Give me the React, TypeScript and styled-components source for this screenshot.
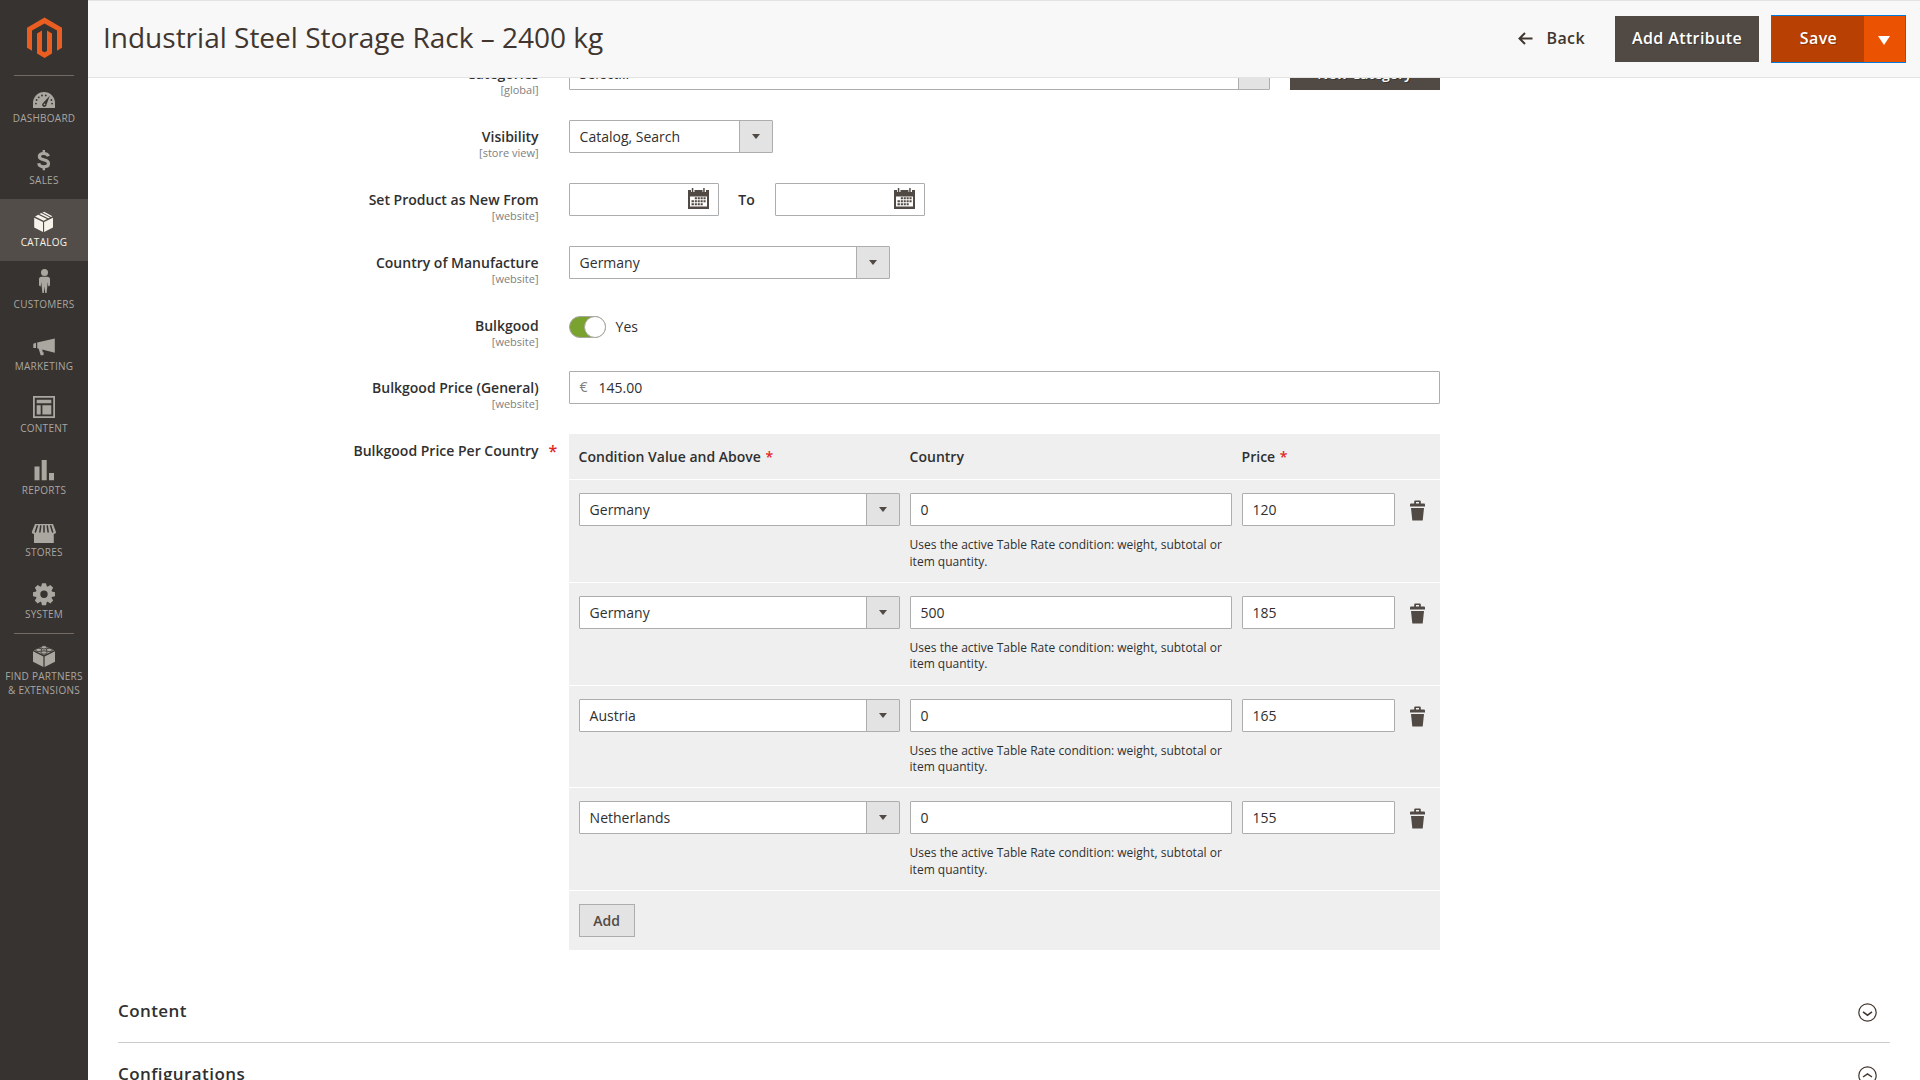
import React from 'react';
import styled, { createGlobalStyle, css } from 'styled-components';

const GlobalStyle = createGlobalStyle`
  *, *::before, *::after { box-sizing: border-box; }
  body {
    margin: 0;
    background: #fff;
    color: #303030;
    font: 400 14px/1.36 'Open Sans', 'Noto Sans', sans-serif;
  }
`;

const Page = styled.div`
  display: flex;
  width: 1920px;
  height: 1080px;
  overflow: hidden;
`;

/* ---------- Sidebar ---------- */

const Sidebar = styled.nav`
  display: flex;
  flex-direction: column;
  flex: none;
  width: 88px;
  background: #373330;
`;

const LogoLink = styled.div`
  height: 75px;
`;

const Divider = styled.hr`
  flex: none;
  width: 60px;
  height: 1px;
  margin: 0 auto -1px;
  border: 0;
  background: #736963;
`;

const MenuItem = styled.a<{ $active?: boolean }>`
  display: flex;
  flex-direction: column;
  flex: none;
  height: 62px;
  background: ${(p) => (p.$active ? '#524d49' : 'transparent')};
  color: ${(p) => (p.$active ? '#f7f3eb' : '#aaa6a0')};
`;

const MenuIcon = styled.svg`
  display: block;
  flex: none;
  width: 88px;
  height: 36px;
  fill: currentColor;
`;

const MenuLabel = styled.span`
  font-size: 10px;
  line-height: 14px;
  letter-spacing: 0.25px;
  text-align: center;
  text-transform: uppercase;
  white-space: pre-line;
`;

/* ---------- Header ---------- */

const Main = styled.main`
  display: flex;
  flex-direction: column;
  flex: 1;
  min-width: 0;
`;

const Header = styled.header`
  display: flex;
  align-items: center;
  flex: none;
  height: 78px;
  padding: 0 14px 0 15px;
  border: solid #e3e3e3;
  border-width: 1px 0;
  background: #f8f8f8;
`;

const Title = styled.h1`
  flex: 1;
  margin: 0;
  padding-bottom: 4px;
  color: #41362f;
  font-size: 28px;
  font-weight: 400;
  line-height: 38px;
`;

const actionText = css`
  padding-bottom: 2px;
  font-size: 16px;
  font-weight: 600;
  letter-spacing: 0.4px;
  line-height: 22px;
`;

const BackButton = styled.a`
  display: flex;
  align-items: center;
  gap: 13px;
  margin-right: 30px;
  color: #41362f;
  ${actionText}
`;

const PrimaryButton = styled.a`
  display: flex;
  align-items: center;
  justify-content: center;
  width: 144px;
  height: 46px;
  margin-right: 12px;
  background: #514943;
  color: #fff;
  text-shadow: 1px 1px 0 rgba(0, 0, 0, 0.25);
  ${actionText}
`;

const SplitButton = styled.div`
  display: flex;
  width: 135px;
  height: 48px;
  border: 1px solid #007bdb;
  background: #eb5202;
`;

const SaveLabel = styled.span`
  display: flex;
  align-items: center;
  justify-content: center;
  width: 92px;
  padding-left: 1px;
  background: #b84002;
  color: #fff;
  text-shadow: 1px 1px 0 rgba(0, 0, 0, 0.25);
  ${actionText}
`;

const SaveToggle = styled.span`
  display: flex;
  align-items: center;
  justify-content: center;
  flex: 1;
  padding: 3px 1px 0 0;
`;

/* ---------- Form ---------- */

const Content = styled.div`
  flex: 1;
  min-height: 0;
  overflow: hidden;
`;

const Form = styled.div`
  margin-top: -21px;
`;

const Field = styled.div<{ $height?: number }>`
  display: flex;
  align-items: flex-start;
  height: ${(p) => p.$height ?? 63}px;
`;

const FieldLabel = styled.div`
  width: 450.6px;
  padding-top: 7px;
  font-weight: 600;
  line-height: 19px;
  text-align: right;
`;

const Scope = styled.div`
  color: #808080;
  font-size: 11px;
  font-weight: 400;
  line-height: 13px;
`;

const LabelGap = styled.div`
  width: 30px;
  padding: 8px 0 0 10px;
`;

const Star = styled.span<{ $size: number }>`
  margin-left: ${(p) => (p.$size < 16 ? 1 : 0)}px;
  color: #e22626;
  font-size: ${(p) => p.$size}px;
  font-weight: 600;
  line-height: 19px;
`;

const Box = styled.div<{ $width: number }>`
  display: flex;
  align-items: center;
  flex: none;
  width: ${(p) => p.$width}px;
  height: 33px;
  padding-left: 10px;
  border: 1px solid #adadad;
  border-radius: 1px;
  background: #fff;
  line-height: 19px;
`;

const BoxText = styled.span`
  flex: 1;
`;

const DropButton = styled.span<{ $width: number }>`
  display: flex;
  align-items: center;
  justify-content: center;
  align-self: stretch;
  width: ${(p) => p.$width}px;
  border-left: 1px solid #adadad;
  background: #e3e3e3;
`;

const CalendarSlot = styled.span`
  display: flex;
  margin: 0 9px 0 auto;
  padding-bottom: 2px;
`;

const ToLabel = styled.span`
  width: 56px;
  padding-top: 7px;
  font-weight: 600;
  line-height: 19px;
  text-align: center;
`;

const Currency = styled.span`
  width: 19px;
  padding-bottom: 2px;
  color: #808080;
`;

const Switch = styled.div`
  display: flex;
  justify-content: flex-end;
  width: 37px;
  height: 22px;
  margin-top: 7px;
  border: 1px solid #aaa6a0;
  border-radius: 11px;
  background: #79a22e;
`;

const Knob = styled.span`
  width: 22px;
  height: 22px;
  margin: -1px -1px 0 0;
  border: 1px solid #aaa6a0;
  border-radius: 50%;
  background: #fff;
`;

const SwitchText = styled.span`
  padding: 8px 0 0 10px;
  line-height: 19px;
`;

const NewCategory = styled.a`
  display: flex;
  align-items: center;
  justify-content: center;
  width: 150px;
  height: 33px;
  margin-left: 20px;
  padding-top: 1px;
  background: #514943;
  color: #fff;
  font-weight: 600;
  text-shadow: 1px 1px 0 rgba(0, 0, 0, 0.3);
`;

/* ---------- Price table ---------- */

const Table = styled.div`
  width: 871px;
  background: #efefef;
`;

const columns = css`
  display: grid;
  grid-template-columns: 321px 322px 153px auto;
  column-gap: 10px;
  padding-left: 10px;
`;

const TableHead = styled.div`
  ${columns}
  height: 45px;
  padding-top: 13px;
  font-weight: 600;
  line-height: 19px;
`;

const TableRow = styled.div`
  ${columns}
  align-items: start;
  height: 102.75px;
  padding-top: 13px;
  border-top: 1px solid #fff;
`;

const Note = styled.div`
  margin-top: 11px;
  font-size: 12px;
  line-height: 16.6px;
`;

const TrashSlot = styled.span`
  display: flex;
  padding: 7px 0 0 5px;
`;

const TableFoot = styled.div`
  height: 60px;
  padding: 13px 10px 0;
  border-top: 1px solid #fff;
`;

const AddButton = styled.a`
  display: flex;
  align-items: center;
  justify-content: center;
  width: 56px;
  height: 33px;
  border: 1px solid #adadad;
  background: #e3e3e3;
  color: #514943;
  font-weight: 600;
`;

/* ---------- Collapsible sections ---------- */

const Sections = styled.div`
  margin: 30px 30px 0;
`;

const Section = styled.div`
  display: flex;
  align-items: center;
  justify-content: space-between;
  height: 63px;
  padding-right: 13px;
  border-bottom: 1px solid #ccc;
  font-size: 17px;
  font-weight: 600;
  letter-spacing: 0.425px;
  line-height: 24px;

  svg {
    margin-top: 2px;
  }
`;

/* ---------- Icons ---------- */

const Logo = () => (
  <svg width="88" height="75" viewBox="0 0 88 75" fill="#eb5e21">
    <path d="M44.5 17.6 62 27.7v20.1l-5 2.9V30.6l-12.5-7.2L32 30.6v20.1l-5-2.9V27.7z" />
    <path d="M37 33.4l5-2.9v20.4l2.5 1.4 2.5-1.4V30.5l5 2.9v20.2l-7.5 4.3-7.5-4.3z" />
  </svg>
);

const gearTeeth = [0, 45, 90, 135, 180, 225, 270, 315];

const icons: Record<string, React.ReactNode> = {
  dashboard: (
    <>
      <path d="M33 33v-5a11 11 0 0 1 22 0v5z" />
      <g fill="#373330">
        <circle cx="35.9" cy="28.6" r=".9" />
        <circle cx="36.6" cy="25" r=".9" />
        <circle cx="38.8" cy="22.3" r=".9" />
        <circle cx="42" cy="20.5" r=".9" />
        <circle cx="45.8" cy="20.4" r=".9" />
        <circle cx="51.4" cy="25" r=".9" />
        <circle cx="52.1" cy="28.6" r=".9" />
        <path d="M49.8 20.8l-3.3 8.6a2.2 2.2 0 1 1-3.2-1.7z" />
      </g>
      <circle cx="44.5" cy="29.4" r=".8" />
    </>
  ),
  sales: (
    <g fill="none" stroke="currentColor">
      <path
        strokeWidth="3.2"
        d="M48.4 19.2c-.6-1.900-2.200-2.700-4.700-2.700-2.700 0-4.300 1.200-4.300 3 0 2.300 2 2.800 4.400 3.300 2.800.6 4.700 1.400 4.700 3.700 0 2.100-1.900 3.300-4.700 3.300-2.800 0-4.700-1.200-5.100-3.500"
      />
      <path strokeWidth="2.4" d="M43.800 13v4M43.800 29v4.300" />
    </g>
  ),
  catalog: (
    <>
      <path d="M34.2 18.7l8.8 4.4v9.9l-8.800-4.600zM53 18.700l-8.900 4.400v9.900l8.900-4.600z" />
      <path d="M35 17.400l3.300-1.700 8.700 4.300-3.400 1.800zM39.500 15l1.800-.9 8.700 4.300-1.800.9zM42.500 13.500l1.600-.8 8.300 4.600-1.400.7z" />
    </>
  ),
  customers: (
    <>
      <circle cx="44.5" cy="11.6" r="3.5" />
      <path d="M41.500 15.800h6c1.600 0 2.500 1 2.500 2.500v6.200l-1.700 1-.5-4.500-1.200 11h-1.400l-.7-6.500-.7 6.500h-1.400l-1.200-11-.5 4.500-1.700-1v-6.200c0-1.500.9-2.500 2.500-2.500z" />
    </>
  ),
  marketing: (
    <>
      <path d="M33.300 20.700l2.700-1v5.300h-2.700zM37.200 19.500l17.600-4v14.200l-17.600-4.500z" />
      <path d="M38.300 24.500l3.800 1.200.7 3.500 1 .4-.4 2.700h-2.700z" />
    </>
  ),
  content: (
    <>
      <path d="M33 11h22v22H33zm1.800 1.800v18.400h18.400V12.800z" fillRule="evenodd" />
      <path d="M36.700 14.700h14.600v3.600H36.700zM36.700 20.200h4v9.200h-4zM42.400 20.200h8.900v9.200h-8.900z" />
    </>
  ),
  reports: <path d="M34.500 19.500h5v13.700h-5zM41.700 13h5v20.200h-5zM49 26h5v7.200h-5z" />,
  stores: (
    <>
      <path d="M35 15h18l3 8c0 1-.8 2-2.200 2v9H34v-9c-1.300 0-2.200-1-2.200-2z" />
      <path
        d="M37.500 16.300l-2.300 7.200M40.800 16.300l-1 7.200M44 16.300v7.200M47.200 16.300l1 7.200M50.500 16.300l2.300 7.200"
        fill="none"
        stroke="#373330"
        strokeWidth="1.500"
      />
    </>
  ),
  system: (
    <>
      <circle cx="44" cy="23.2" r="6" fill="none" stroke="currentColor" strokeWidth="4.600" />
      {gearTeeth.map((angle) => (
        <path key={angle} d="M41 16.500l1-4.300h4l1 4.300z" transform={`rotate(${angle} 44 23.200)`} />
      ))}
    </>
  ),
  partners: (
    <>
      <path d="M33 18.300l10.400 5.200V34L33 28.800zM55 18.300l-10.400 5.200V34L55 28.800z" />
      <path d="M34 17.200l10-4.500 10 4.500-10 5z" />
      <g stroke="#373330" strokeWidth=".9">
        <ellipse cx="44" cy="14.300" rx="3" ry="1.700" />
        <ellipse cx="38.700" cy="16.900" rx="3" ry="1.700" />
        <ellipse cx="49.300" cy="16.900" rx="3" ry="1.700" />
        <ellipse cx="44" cy="19.500" rx="3" ry="1.700" />
      </g>
    </>
  ),
};

const BackArrow = () => (
  <svg width="15" height="13" viewBox="0 0 15 13" fill="none" stroke="#41362f" strokeWidth="2">
    <path d="M14.500 6.500H2M7 1L1.500 6.500 7 12" />
  </svg>
);

const Caret = ({ width = 8, height = 5, color = '#41362f' }) => (
  <svg width={width} height={height} viewBox="0 0 8 5" preserveAspectRatio="none" fill={color}>
    <path d="M0 0h8L4 5z" />
  </svg>
);

const Calendar = () => (
  <svg width="21" height="21" viewBox="0 0 21 21" fill="#514943">
    <path fillRule="evenodd" d="M0 2h3v2h3.500v-2h8v2H18v-2h3V21H0zM2 8.500v10h17v-10z" />
    <path d="M3.800 0h1.500v4H3.800zM15.200 0h1.500v4h-1.500z" />
    <path d="M6.800 9.200h2.100v2H6.800zM9.700 9.200h2.100v2H9.700zM12.600 9.200h2.100v2h-2.100zM15.500 9.200h2.100v2h-2.100zM3.500 12.200h2.400v2H3.500zM6.800 12.200h2.100v2H6.800zM9.700 12.200h2.100v2H9.700zM12.600 12.200h2.100v2h-2.100zM15.500 12.200h2.100v2h-2.100zM3.500 15.200h2.400v2H3.500zM6.800 15.200h2.100v2H6.800zM9.700 15.200h2.100v2H9.700zM12.600 15.200h2.100v2h-2.100z" />
  </svg>
);

const Trash = () => (
  <svg width="15" height="21" viewBox="0 0 15 21" fill="#514943">
    <path fillRule="evenodd" d="M4.200 3.500V1.500Q4.200.5 5.200.5h4.600q1 0 1 1v2H14q1 0 1 1.300V6.500H0V4.800q0-1.300 1-1.300zM6 2v1.500h3V2z" />
    <path d="M1 8h13l-1.300 12.500H2.300z" />
  </svg>
);

const Chevron = ({ up = false }: { up?: boolean }) => (
  <svg width="19" height="19" viewBox="0 0 19 19" fill="none" stroke="#41362f" strokeWidth="1.200">
    <circle cx="9.500" cy="9.500" r="8.700" />
    <path d={up ? 'M5 11l4.500-3.200L14 11' : 'M5 8.800l4.500 3.400L14 8.800'} strokeWidth="1.500" />
  </svg>
);

/* ---------- Composed parts ---------- */

const Select = ({ value, width, drop = 33 }: { value: string; width: number; drop?: number }) => (
  <Box $width={width}>
    <BoxText>{value}</BoxText>
    <DropButton $width={drop}>
      <Caret color="#514943" />
    </DropButton>
  </Box>
);

const Label = ({ text, scope }: { text: string; scope?: string }) => (
  <FieldLabel>
    {text}
    {scope && <Scope>[{scope}]</Scope>}
  </FieldLabel>
);

const DateInput = () => (
  <Box $width={150}>
    <CalendarSlot>
      <Calendar />
    </CalendarSlot>
  </Box>
);

const menu = [
  ['dashboard', 'Dashboard'],
  ['sales', 'Sales'],
  ['catalog', 'Catalog'],
  ['customers', 'Customers'],
  ['marketing', 'Marketing'],
  ['content', 'Content'],
  ['reports', 'Reports'],
  ['stores', 'Stores'],
  ['system', 'System'],
];

const prices = [
  { country: 'Germany', condition: '0', price: '120' },
  { country: 'Germany', condition: '500', price: '185' },
  { country: 'Austria', condition: '0', price: '165' },
  { country: 'Netherlands', condition: '0', price: '155' },
];

export default function App() {
  return (
    <Page>
      <GlobalStyle />
      <Sidebar>
        <LogoLink>
          <Logo />
        </LogoLink>
        <Divider />
        {menu.map(([id, label]) => (
          <MenuItem key={id} $active={id === 'catalog'}>
            <MenuIcon viewBox="0 0 88 36">{icons[id]}</MenuIcon>
            <MenuLabel>{label}</MenuLabel>
          </MenuItem>
        ))}
        <Divider />
        <MenuItem>
          <MenuIcon viewBox="0 0 88 36">{icons.partners}</MenuIcon>
          <MenuLabel>{'Find Partners\n& Extensions'}</MenuLabel>
        </MenuItem>
      </Sidebar>

      <Main>
        <Header>
          <Title>Industrial Steel Storage Rack – 2400 kg</Title>
          <BackButton>
            <BackArrow />
            Back
          </BackButton>
          <PrimaryButton>Add Attribute</PrimaryButton>
          <SplitButton>
            <SaveLabel>Save</SaveLabel>
            <SaveToggle>
              <Caret width={12} height={9} color="#fff" />
            </SaveToggle>
          </SplitButton>
        </Header>

        <Content>
          <Form>
            <Field>
              <Label text="Categories" scope="global" />
              <LabelGap />
              <Select value="Select..." width={701} drop={31} />
              <NewCategory>New Category</NewCategory>
            </Field>
            <Field>
              <Label text="Visibility" scope="store view" />
              <LabelGap />
              <Select value="Catalog, Search" width={204} />
            </Field>
            <Field>
              <Label text="Set Product as New From" scope="website" />
              <LabelGap />
              <DateInput />
              <ToLabel>To</ToLabel>
              <DateInput />
            </Field>
            <Field>
              <Label text="Country of Manufacture" scope="website" />
              <LabelGap />
              <Select value="Germany" width={321} />
            </Field>
            <Field $height={62}>
              <Label text="Bulkgood" scope="website" />
              <LabelGap />
              <Switch>
                <Knob />
              </Switch>
              <SwitchText>Yes</SwitchText>
            </Field>
            <Field>
              <Label text="Bulkgood Price (General)" scope="website" />
              <LabelGap />
              <Box $width={871}>
                <Currency>€</Currency>
                <BoxText>145.00</BoxText>
              </Box>
            </Field>
            <Field $height={516}>
              <Label text="Bulkgood Price Per Country" />
              <LabelGap>
                <Star $size={16}>*</Star>
              </LabelGap>
              <Table>
                <TableHead>
                  <span>
                    Condition Value and Above <Star $size={14}>*</Star>
                  </span>
                  <span>Country</span>
                  <span>
                    Price <Star $size={14}>*</Star>
                  </span>
                </TableHead>
                {prices.map((row, i) => (
                  <TableRow key={i}>
                    <Select value={row.country} width={321} />
                    <div>
                      <Box $width={322}>{row.condition}</Box>
                      <Note>Uses the active Table Rate condition: weight, subtotal or item quantity.</Note>
                    </div>
                    <Box $width={153}>{row.price}</Box>
                    <TrashSlot>
                      <Trash />
                    </TrashSlot>
                  </TableRow>
                ))}
                <TableFoot>
                  <AddButton>Add</AddButton>
                </TableFoot>
              </Table>
            </Field>
          </Form>
          <Sections>
            <Section>
              Content
              <Chevron />
            </Section>
            <Section>
              Configurations
              <Chevron up />
            </Section>
          </Sections>
        </Content>
      </Main>
    </Page>
  );
}
